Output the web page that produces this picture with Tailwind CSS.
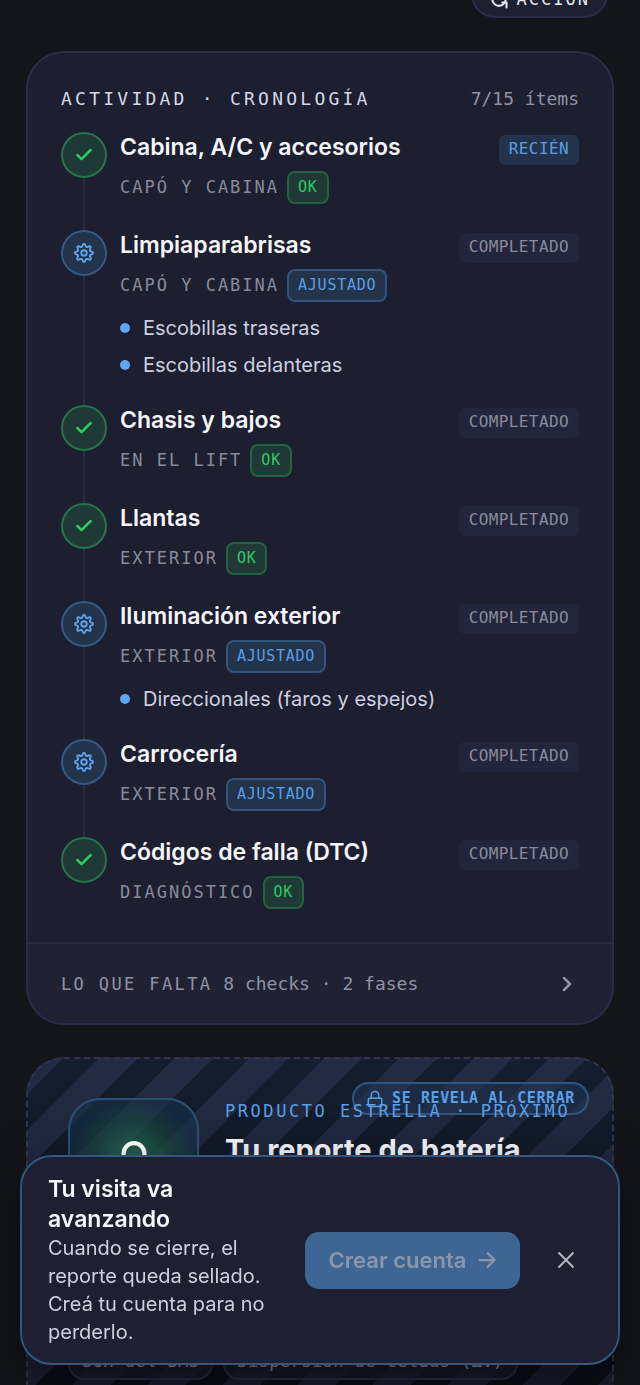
<!DOCTYPE html>
<html lang="es">
<head>
  <meta charset="utf-8">
  <meta name="viewport" content="width=device-width, initial-scale=1">
  <title>Tu visita</title>
  <script src="https://cdn.jsdelivr.net/npm/@tailwindcss/browser@4"></script>
</head>
<body class="h-screen overflow-hidden bg-[#13151a] font-['Inter','Liberation_Sans',sans-serif] text-[#cdd0e0]">
  <!-- icons -->
  <svg class="hidden">
    <symbol id="check" viewBox="0 0 24 24" fill="none" stroke="currentColor" stroke-width="3" stroke-linecap="round" stroke-linejoin="round">
      <path d="M20 6 9 17l-5-5" />
    </symbol>
    <symbol id="gear" viewBox="0 0 24 24" fill="none" stroke="currentColor" stroke-width="2" stroke-linecap="round" stroke-linejoin="round">
      <circle cx="12" cy="12" r="3" />
      <path id="tooth" d="M9.2 5.3Q10.3 5 10.5 3.8Q10.7 2 12 2Q13.3 2 13.5 3.8Q13.7 5 14.8 5.3" />
      <use href="#tooth" transform="rotate(45 12 12)" />
      <use href="#tooth" transform="rotate(90 12 12)" />
      <use href="#tooth" transform="rotate(135 12 12)" />
      <use href="#tooth" transform="rotate(180 12 12)" />
      <use href="#tooth" transform="rotate(225 12 12)" />
      <use href="#tooth" transform="rotate(270 12 12)" />
      <use href="#tooth" transform="rotate(315 12 12)" />
    </symbol>
    <symbol id="lock" viewBox="0 0 24 24" fill="none" stroke="currentColor" stroke-width="2" stroke-linecap="round" stroke-linejoin="round">
      <rect x="3" y="11" width="18" height="11" rx="2" />
      <path d="M7 11V7a5 5 0 0 1 10 0v4" />
    </symbol>
  </svg>

  <header class="flex h-[18px] items-end justify-end overflow-hidden px-8">
    <button type="button" class="flex h-14 shrink-0 items-center gap-2 rounded-[24px] border-2 border-[#2d2b4a] bg-[#1e1f31] px-4 pt-5 font-['DejaVu_Sans_Mono','Liberation_Mono',monospace] text-[17px] tracking-[2px] text-[#e4e6f2]">
      <svg class="size-5" viewBox="0 0 24 24" fill="none" stroke="currentColor" stroke-width="2.5" stroke-linecap="round">
        <circle cx="12" cy="11" r="8" />
        <path d="M16 15h5v6" />
      </svg>
      ACCIÓN
    </button>
  </header>

  <main class="mt-[33px] px-[26px]">
    <section class="overflow-hidden rounded-[38px] border-2 border-[#2d2b4a] bg-[#1d1e2f]">
      <div class="px-[33px] pt-8 pb-[33px]">
        <div class="flex items-center justify-between pb-[19px] font-['DejaVu_Sans_Mono','Liberation_Mono',monospace] text-[18px] leading-7">
          <h2 class="tracking-[0.18em] text-[#d5d8e8]">ACTIVIDAD · CRONOLOGÍA</h2>
          <span class="text-[#9193a5]">7/15 ítems</span>
        </div>

        <ol>
          <li class="flex gap-[13px]">
            <div class="flex w-[46px] shrink-0 flex-col items-center">
              <span class="grid size-[46px] place-items-center rounded-full border-2 border-[#247549] bg-[#1e3936] text-[#2fc965]"><svg class="size-5"><use href="#check" /></svg></span>
              <span class="w-[2px] grow bg-[#292b41]"></span>
            </div>
            <div class="grow pb-[26px]">
              <h3 class="text-[23px] font-semibold leading-[30px] text-[#f5f6fc]">Cabina, A/C y accesorios</h3>
              <p class="mt-[9px] flex items-center gap-2 font-['DejaVu_Sans_Mono','Liberation_Mono',monospace] text-[17px] tracking-[2px] text-[#898b9c]">CAPÓ Y CABINA
                <span class="h-[33px] rounded-lg border-2 border-[#22643f] bg-[#1e3936] px-[9px] text-[15px] leading-[28px] tracking-wider text-[#2fc965]">OK</span></p>
            </div>
            <span class="mt-[3px] h-[30px] rounded-md bg-[#22334b] px-[10px] font-['DejaVu_Sans_Mono','Liberation_Mono',monospace] text-[16px] leading-[28px] tracking-wide text-[#5a9fe6]">RECIÉN</span>
          </li>

          <li class="flex gap-[13px]">
            <div class="flex w-[46px] shrink-0 flex-col items-center">
              <span class="grid size-[46px] place-items-center rounded-full border-2 border-[#335a85] bg-[#22334a] text-[#5ea7f0]"><svg class="size-[22px]"><use href="#gear" /></svg></span>
              <span class="w-[2px] grow bg-[#292b41]"></span>
            </div>
            <div class="grow pb-[26px]">
              <h3 class="text-[23px] font-semibold leading-[30px] text-[#f5f6fc]">Limpiaparabrisas</h3>
              <p class="mt-[9px] flex items-center gap-2 font-['DejaVu_Sans_Mono','Liberation_Mono',monospace] text-[17px] tracking-[2px] text-[#898b9c]">CAPÓ Y CABINA
                <span class="h-[33px] rounded-lg border-2 border-[#33557d] bg-[#22334a] px-[9px] text-[15px] leading-[28px] tracking-wider text-[#5a9fe6]">AJUSTADO</span></p>
              <ul class="mt-3 flex flex-col gap-[9px] text-[20px] leading-7">
                <li class="flex items-center gap-[13px]"><span class="size-[10px] rounded-full bg-[#5ea7f0]"></span>Escobillas traseras</li>
                <li class="flex items-center gap-[13px]"><span class="size-[10px] rounded-full bg-[#5ea7f0]"></span>Escobillas delanteras</li>
              </ul>
            </div>
            <span class="mt-[3px] h-[30px] rounded-md bg-[#23263a] px-[10px] font-['DejaVu_Sans_Mono','Liberation_Mono',monospace] text-[16px] leading-[28px] tracking-wide text-[#898b9c]">COMPLETADO</span>
          </li>

          <li class="flex gap-[13px]">
            <div class="flex w-[46px] shrink-0 flex-col items-center">
              <span class="grid size-[46px] place-items-center rounded-full border-2 border-[#247549] bg-[#1e3936] text-[#2fc965]"><svg class="size-5"><use href="#check" /></svg></span>
              <span class="w-[2px] grow bg-[#292b41]"></span>
            </div>
            <div class="grow pb-[26px]">
              <h3 class="text-[23px] font-semibold leading-[30px] text-[#f5f6fc]">Chasis y bajos</h3>
              <p class="mt-[9px] flex items-center gap-2 font-['DejaVu_Sans_Mono','Liberation_Mono',monospace] text-[17px] tracking-[2px] text-[#898b9c]">EN EL LIFT
                <span class="h-[33px] rounded-lg border-2 border-[#22643f] bg-[#1e3936] px-[9px] text-[15px] leading-[28px] tracking-wider text-[#2fc965]">OK</span></p>
            </div>
            <span class="mt-[3px] h-[30px] rounded-md bg-[#23263a] px-[10px] font-['DejaVu_Sans_Mono','Liberation_Mono',monospace] text-[16px] leading-[28px] tracking-wide text-[#898b9c]">COMPLETADO</span>
          </li>

          <li class="flex gap-[13px]">
            <div class="flex w-[46px] shrink-0 flex-col items-center">
              <span class="grid size-[46px] place-items-center rounded-full border-2 border-[#247549] bg-[#1e3936] text-[#2fc965]"><svg class="size-5"><use href="#check" /></svg></span>
              <span class="w-[2px] grow bg-[#292b41]"></span>
            </div>
            <div class="grow pb-[26px]">
              <h3 class="text-[23px] font-semibold leading-[30px] text-[#f5f6fc]">Llantas</h3>
              <p class="mt-[9px] flex items-center gap-2 font-['DejaVu_Sans_Mono','Liberation_Mono',monospace] text-[17px] tracking-[2px] text-[#898b9c]">EXTERIOR
                <span class="h-[33px] rounded-lg border-2 border-[#22643f] bg-[#1e3936] px-[9px] text-[15px] leading-[28px] tracking-wider text-[#2fc965]">OK</span></p>
            </div>
            <span class="mt-[3px] h-[30px] rounded-md bg-[#23263a] px-[10px] font-['DejaVu_Sans_Mono','Liberation_Mono',monospace] text-[16px] leading-[28px] tracking-wide text-[#898b9c]">COMPLETADO</span>
          </li>

          <li class="flex gap-[13px]">
            <div class="flex w-[46px] shrink-0 flex-col items-center">
              <span class="grid size-[46px] place-items-center rounded-full border-2 border-[#335a85] bg-[#22334a] text-[#5ea7f0]"><svg class="size-[22px]"><use href="#gear" /></svg></span>
              <span class="w-[2px] grow bg-[#292b41]"></span>
            </div>
            <div class="grow pb-[26px]">
              <h3 class="text-[23px] font-semibold leading-[30px] text-[#f5f6fc]">Iluminación exterior</h3>
              <p class="mt-[9px] flex items-center gap-2 font-['DejaVu_Sans_Mono','Liberation_Mono',monospace] text-[17px] tracking-[2px] text-[#898b9c]">EXTERIOR
                <span class="h-[33px] rounded-lg border-2 border-[#33557d] bg-[#22334a] px-[9px] text-[15px] leading-[28px] tracking-wider text-[#5a9fe6]">AJUSTADO</span></p>
              <ul class="mt-3 flex flex-col gap-[9px] text-[20px] leading-7">
                <li class="flex items-center gap-[13px]"><span class="size-[10px] rounded-full bg-[#5ea7f0]"></span>Direccionales (faros y espejos)</li>
              </ul>
            </div>
            <span class="mt-[3px] h-[30px] rounded-md bg-[#23263a] px-[10px] font-['DejaVu_Sans_Mono','Liberation_Mono',monospace] text-[16px] leading-[28px] tracking-wide text-[#898b9c]">COMPLETADO</span>
          </li>

          <li class="flex gap-[13px]">
            <div class="flex w-[46px] shrink-0 flex-col items-center">
              <span class="grid size-[46px] place-items-center rounded-full border-2 border-[#335a85] bg-[#22334a] text-[#5ea7f0]"><svg class="size-[22px]"><use href="#gear" /></svg></span>
              <span class="w-[2px] grow bg-[#292b41]"></span>
            </div>
            <div class="grow pb-[26px]">
              <h3 class="text-[23px] font-semibold leading-[30px] text-[#f5f6fc]">Carrocería</h3>
              <p class="mt-[9px] flex items-center gap-2 font-['DejaVu_Sans_Mono','Liberation_Mono',monospace] text-[17px] tracking-[2px] text-[#898b9c]">EXTERIOR
                <span class="h-[33px] rounded-lg border-2 border-[#33557d] bg-[#22334a] px-[9px] text-[15px] leading-[28px] tracking-wider text-[#5a9fe6]">AJUSTADO</span></p>
            </div>
            <span class="mt-[3px] h-[30px] rounded-md bg-[#23263a] px-[10px] font-['DejaVu_Sans_Mono','Liberation_Mono',monospace] text-[16px] leading-[28px] tracking-wide text-[#898b9c]">COMPLETADO</span>
          </li>

          <li class="flex gap-[13px]">
            <span class="grid size-[46px] shrink-0 place-items-center rounded-full border-2 border-[#247549] bg-[#1e3936] text-[#2fc965]"><svg class="size-5"><use href="#check" /></svg></span>
            <div class="grow">
              <h3 class="text-[23px] font-semibold leading-[30px] text-[#f5f6fc]">Códigos de falla (DTC)</h3>
              <p class="mt-[9px] flex items-center gap-2 font-['DejaVu_Sans_Mono','Liberation_Mono',monospace] text-[17px] tracking-[2px] text-[#898b9c]">DIAGNÓSTICO
                <span class="h-[33px] rounded-lg border-2 border-[#22643f] bg-[#1e3936] px-[9px] text-[15px] leading-[28px] tracking-wider text-[#2fc965]">OK</span></p>
            </div>
            <span class="mt-[3px] h-[30px] rounded-md bg-[#23263a] px-[10px] font-['DejaVu_Sans_Mono','Liberation_Mono',monospace] text-[16px] leading-[28px] tracking-wide text-[#898b9c]">COMPLETADO</span>
          </li>
        </ol>
      </div>

      <button type="button" class="flex h-[81px] w-full items-center justify-between border-t-2 border-[#292b41] bg-[#202233] px-[33px] font-['DejaVu_Sans_Mono','Liberation_Mono',monospace] text-[18px] text-[#9193a5]">
        <span><span class="text-[17px] tracking-[0.14em]">LO QUE FALTA</span> 8 checks · 2 fases</span>
        <svg class="size-6" viewBox="0 0 24 24" fill="none" stroke="currentColor" stroke-width="2.5" stroke-linecap="round" stroke-linejoin="round"><path d="m9 18 6-6-6-6" /></svg>
      </button>
    </section>

    <section class="relative mt-8 overflow-hidden rounded-[38px] border-2 border-dashed border-[#33324f] bg-[repeating-linear-gradient(135deg,rgba(120,120,180,0.15)_0px,rgba(120,120,180,0.15)_27px,transparent_27px,transparent_53px),linear-gradient(#131e2e,#0a0b14)] bg-origin-border px-10 pt-[39px] pb-12">
      <span class="absolute top-[23px] right-[23px] flex h-[33px] items-center gap-2 rounded-full border-2 border-[#2f5580] bg-[#213653]/60 px-3 font-['DejaVu_Sans_Mono','Liberation_Mono',monospace] text-[15px] font-bold tracking-[0.04em] text-[#5a9fe6]">
        <svg class="size-[18px]"><use href="#lock" /></svg>SE REVELA AL CERRAR</span>
      <div class="relative flex gap-[26px]">
        <div class="grid size-[131px] shrink-0 place-items-center rounded-[32px] border-2 border-[#2c5075] bg-[radial-gradient(circle,#2c8a5cbb_0%,#1a4a40aa_45%,#17304a99_72%)] text-white">
          <svg class="size-[50px]"><use href="#lock" /></svg>
        </div>
        <div class="grow whitespace-nowrap">
          <p class="font-['DejaVu_Sans_Mono','Liberation_Mono',monospace] text-[17px] leading-[26px] tracking-[0.15em] text-[#5a9fe6]">PRODUCTO ESTRELLA · PRÓXIMO</p>
          <h2 class="mt-[6px] text-[29px] font-bold leading-10 text-[#f5f6fc]">Tu reporte de batería</h2>
        </div>
      </div>
      <ul class="mt-[115px] flex gap-[10px] whitespace-nowrap font-['DejaVu_Sans_Mono','Liberation_Mono',monospace] text-[17px] tracking-wide text-[#9496a6]">
        <li class="flex h-9 items-center rounded-2xl border-2 border-[#2b2d40] bg-[#1c1e2e]/70 px-3">SOH del BMS</li>
        <li class="flex h-9 items-center rounded-2xl border-2 border-[#2b2d40] bg-[#1c1e2e]/70 px-3">Dispersión de celdas (ΔV)</li>
      </ul>
    </section>
  </main>

  <aside class="fixed inset-x-5 bottom-5 flex items-center rounded-[32px] border-2 border-[#33577f] bg-[#1e1f30] py-[17px] pr-[30px] pl-[26px] shadow-[0_20px_50px_rgba(0,0,0,0.5)]">
    <div class="w-[257px] pr-6">
      <h2 class="text-[23px] font-semibold leading-[30px] text-[#f5f6fc]">Tu visita va avanzando</h2>
      <p class="text-[20px] leading-7">Cuando se cierre, el reporte queda sellado. Creá tu cuenta para no perderlo.</p>
    </div>
    <button type="button" class="flex h-[57px] grow items-center justify-center gap-3 whitespace-nowrap rounded-[14px] bg-[#3e6694] text-[22px] font-semibold text-[#8c96aa]">Crear cuenta
      <svg class="size-[18px]" viewBox="0 0 24 24" fill="none" stroke="currentColor" stroke-width="3" stroke-linecap="round" stroke-linejoin="round"><path d="M2 12h20M13 3l9 9-9 9" /></svg>
    </button>
    <button type="button" aria-label="Cerrar" class="ml-6 grid size-11 place-items-center text-[#b4b6c6]">
      <svg class="size-6" viewBox="0 0 24 24" fill="none" stroke="currentColor" stroke-width="2" stroke-linecap="round"><path d="M5 5l14 14M19 5 5 19" /></svg>
    </button>
  </aside>
</body>
</html>
